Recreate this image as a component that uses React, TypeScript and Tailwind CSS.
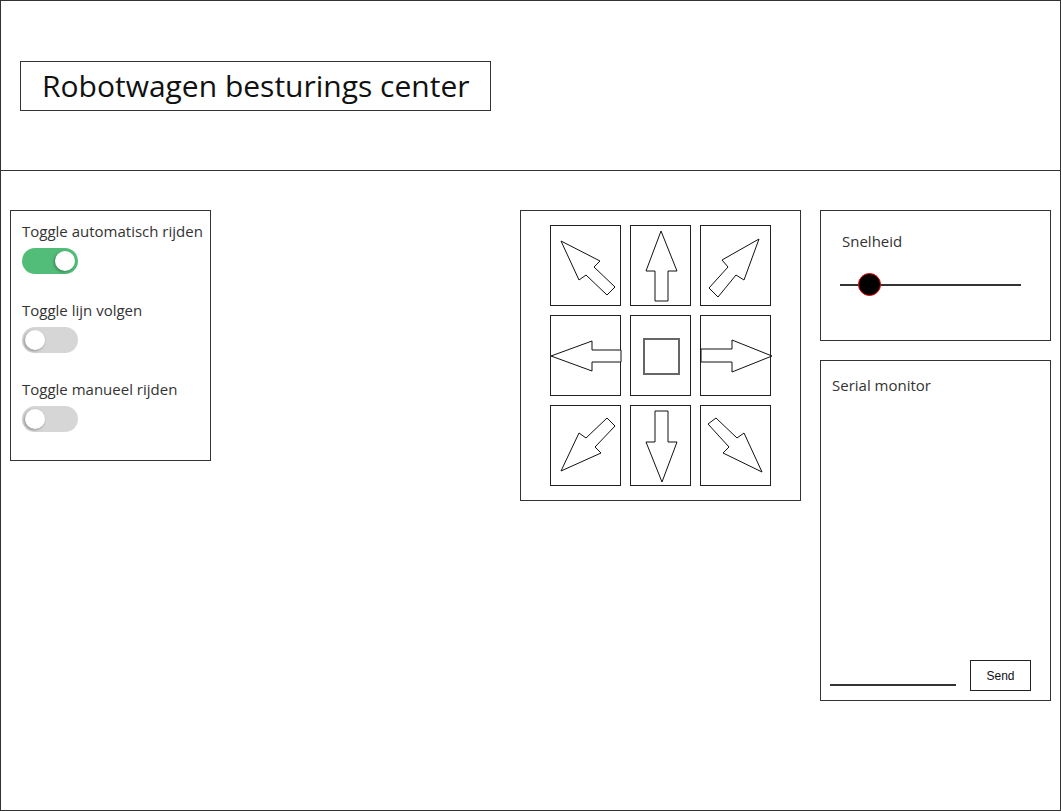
const FONT = "font-['Open_Sans',sans-serif]";

type Pt = [number, number];

const ARROWS: { w: number; pts?: Pt[]; square?: boolean }[] = [
  { w: 70, pts: [[10, 15], [49, 35], [43, 41], [64, 61], [56, 69], [35, 49], [28, 54]] },
  { w: 60, pts: [[30, 5], [46, 45], [37, 45], [37, 75], [24, 75], [24, 45], [15, 45]] },
  { w: 70, pts: [[58, 13], [21, 34], [27, 41], [8, 62], [17, 71], [35, 49], [43, 54]] },
  { w: 70, pts: [[0, 40], [41, 25], [41, 34], [70, 34], [70, 46], [41, 46], [41, 55]] },
  { w: 60, square: true },
  { w: 70, pts: [[0, 33], [31, 33], [31, 24], [71, 40], [31, 56], [31, 46], [0, 46]] },
  { w: 70, pts: [[10, 65], [28, 27], [35, 32], [56, 12], [64, 20], [44, 41], [50, 47]] },
  { w: 60, pts: [[24, 5], [37, 5], [37, 36], [46, 36], [31, 76], [15, 36], [24, 36]] },
  { w: 70, pts: [[7, 18], [15, 12], [36, 32], [43, 27], [61, 66], [22, 47], [28, 41]] },
];

function Toggle({ on }: { on: boolean }) {
  return (
    <div
      className={`relative h-[26px] w-[56px] rounded-full ${on ? 'bg-[#52bd78]' : 'bg-[#d6d6d6]'}`}
    >
      <div
        className={`absolute top-[3px] h-[20px] w-[20px] rounded-full bg-white shadow-[-1px_1px_3px_rgba(0,0,0,0.35)] ${
          on ? 'left-[33px]' : 'left-[3px]'
        }`}
      />
    </div>
  );
}

function PadButton({ w, pts, square }: { w: number; pts?: Pt[]; square?: boolean }) {
  return (
    <button className="relative h-[81px] border border-[#222] bg-white" style={{ width: w + 1 }}>
      <svg
        className="absolute left-0 top-0 overflow-visible"
        width={w}
        height={80}
        viewBox={`0 0 ${w} 80`}
      >
        {pts && (
          <polygon
            points={pts.map((p) => p.join(',')).join(' ')}
            fill="white"
            stroke="#111"
            strokeWidth="1"
          />
        )}
        {square && (
          <rect x="13" y="23" width="35" height="35" fill="white" stroke="#666" strokeWidth="2" />
        )}
      </svg>
    </button>
  );
}

export default function App() {
  return (
    <div className={`flex h-[811px] w-[1061px] flex-col border border-[#333] bg-white ${FONT}`}>
      {/* header */}
      <header className="h-[170px] border-b border-[#333] pl-[19px] pt-[60px]">
        <div className="flex h-[50px] w-[471px] items-center border border-[#333] pl-[21px]">
          <h1 className="text-[30px] leading-none text-[#111]">Robotwagen besturings center</h1>
        </div>
      </header>

      <main className="flex pl-[9px] pt-[39px] text-[15px] text-[#333]">
        {/* toggles */}
        <div className="flex h-[251px] w-[201px] flex-col border border-[#333] pl-[11px] pt-[11px]">
          {[
            ['Toggle automatisch rijden', true],
            ['Toggle lijn volgen', false],
            ['Toggle manueel rijden', false],
          ].map(([label, on]) => (
            <div key={label as string} className="mb-[27px] flex flex-col gap-[8px]">
              <span className="leading-[18px]">{label}</span>
              <Toggle on={on as boolean} />
            </div>
          ))}
        </div>

        {/* direction pad */}
        <div className="ml-[309px] h-[291px] w-[281px] border border-[#333] pl-[29px] pt-[14px]">
          <div className="grid w-[211px] grid-cols-[71px_61px_71px] gap-x-[9px] gap-y-[9px]">
            {ARROWS.map((a, i) => (
              <PadButton key={i} {...a} />
            ))}
          </div>
        </div>

        {/* right column */}
        <div className="ml-[19px] flex w-[231px] flex-col gap-[19px]">
          <div className="h-[131px] border border-[#333] pl-[21px] pt-[21px]">
            <div className="leading-[18px]">Snelheid</div>
            <div className="relative ml-[-2px] mt-[23px] h-[24px] w-[181px]">
              <div className="absolute left-0 right-0 top-[11px] h-[2px] bg-[#333]" />
              <div className="absolute left-[18px] top-0 h-[23px] w-[23px] rounded-full border border-[#e00] bg-black" />
            </div>
          </div>

          <div className="flex h-[341px] flex-col border border-[#333] pb-[9px] pl-[9px] pr-[19px] pt-[15px]">
            <div className="pl-[2px] leading-[18px]">Serial monitor</div>
            <div className="mt-auto flex items-end justify-between">
              <div className="mb-[5px] h-[2px] w-[126px] bg-[#333]" />
              <button className="flex h-[31px] w-[61px] items-center justify-center border border-[#222] font-['Liberation_Sans',sans-serif] text-[12px] text-[#111]">
                Send
              </button>
            </div>
          </div>
        </div>
      </main>
    </div>
  );
}
